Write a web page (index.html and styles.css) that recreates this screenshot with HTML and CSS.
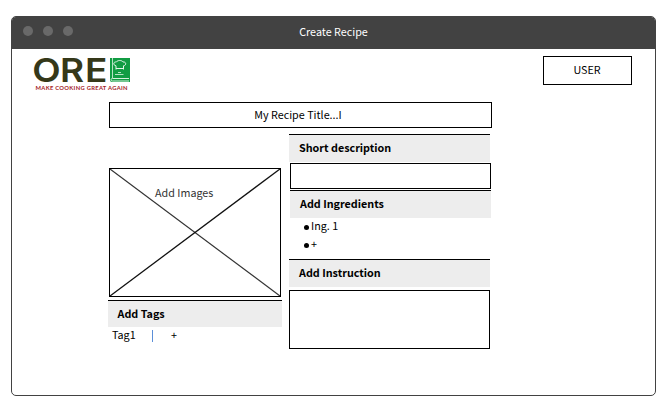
FILE: index.html
```html
<!DOCTYPE html>
<html lang="en">
<head>
<meta charset="utf-8">
<title>Create Recipe</title>
<link rel="stylesheet" href="styles.css">
</head>
<body>
<div class="window">
  <header class="titlebar">
    <div class="dots"><i class="dot"></i><i class="dot"></i><i class="dot"></i></div>
    <h1 class="window-title">Create Recipe</h1>
  </header>
  <div class="top">
    <svg class="logo" width="100" height="44" viewBox="32 49 100 44">
      <text class="logo-name" transform="scale(1.12 1)" x="28.9 53.6 75.9" y="82">ORE</text>
      <text class="logo-tag" x="35.5" y="90.3" textLength="92">MAKE COOKING GREAT AGAIN</text>
      <path d="M110 58H130V82H112Q110 82 110 80Z" fill="#119c43"/>
      <path d="M112.5 58V78" stroke="#b5e2c3" fill="none"/>
      <path d="M129 78.5H112.5Q111 78.5 111 79.7T112.5 81H129" stroke="#d5efdd" stroke-width="1" fill="none"/>
      <path d="M116 69.5V65.8C113 65.5 113 61.5 116.4 62C117.4 60 122 60 123 62C126.5 61.5 126.5 65.6 123.5 65.8V69.5M116 68.5H123.5" stroke="#e4f5e9" stroke-width="1" fill="none"/>
      <path d="M115 74.5H123.5M118 72.5H121" stroke="#b5e2c3" stroke-width="1"/>
    </svg>
    <button class="user">USER</button>
  </div>
  <div class="recipe-title">My Recipe Title...I</div>
  <main class="columns">
    <section class="left">
      <div class="image-box">
        <svg class="cross" width="170" height="127" viewBox="0 0 170 127">
          <path d="M0 0L170 127" stroke="#333" stroke-width="1.2"/>
          <path d="M170 0L0 127" stroke="#111" stroke-width="1.3"/>
        </svg>
        <span class="image-label">Add Images</span>
      </div>
      <h2 class="heading tags-heading">Add Tags</h2>
      <div class="tags"><span class="tag">Tag1</span><i class="divider"></i><span>+</span></div>
    </section>
    <section class="right">
      <h2 class="heading">Short description</h2>
      <div class="field short-field"></div>
      <h2 class="heading shifted">Add Ingredients</h2>
      <ul class="ingredients"><li><i class="bullet"></i>Ing. 1</li><li><i class="bullet"></i>+</li></ul>
      <h2 class="heading">Add Instruction</h2>
      <div class="field long-field"></div>
    </section>
  </main>
</div>
</body>
</html>
```
FILE: styles.css
```css
* { box-sizing: border-box; }
body {
  margin: 0;
  padding: 16px 9px 12px 11px;
  background: #fff;
  color: #000;
  font: 10.75px/16px "Noto Sans CJK SC", "Noto Sans", sans-serif;
}
h1, h2, ul { margin: 0; padding: 0; font-size: inherit; }
.window {
  height: 380px;
  border: 1px solid #424242;
  border-radius: 5px;
  overflow: hidden;
}
.titlebar {
  display: grid;
  grid-template-columns: 1fr auto 1fr;
  height: 32px;
  background: #424242;
}
.dots { display: flex; gap: 10px; padding: 9px 0 0 10.5px; }
.dot { width: 10px; height: 10px; border-radius: 50%; background: #696969; }
.window-title { padding-top: 7px; color: #fff; font-weight: 400; }
.top {
  display: flex;
  justify-content: space-between;
  height: 53px;
  padding: 0 23px 0 20px;
}
.logo { display: block; }
.logo-name { font: 600 33px Inter, sans-serif; fill: #353819; }
.logo-tag { font: 700 5.8px Lato, sans-serif; fill: #a3201f; }
.user {
  width: 89px;
  height: 29px;
  margin-top: 7px;
  padding: 0 1px 1px 0;
  border: 1px solid #000;
  background: #fff;
  color: #000;
  font: inherit;
}
.recipe-title {
  width: 383px;
  height: 26px;
  margin-left: 97px;
  padding-right: 5px;
  border: 1px solid #000;
  line-height: 24px;
  text-align: center;
}
.columns {
  display: grid;
  grid-template-columns: 174px 202px;
  column-gap: 7px;
  margin: 6px 0 0 96px;
}
.left { padding-top: 34px; }
.image-box {
  display: grid;
  width: 172px;
  height: 129px;
  margin-left: 1px;
  border: 1px solid #000;
}
.cross, .image-label { grid-area: 1 / 1; }
.image-label { padding: 16px 0 0 45px; color: #333; }
.heading {
  width: 201px;
  height: 28px;
  padding-left: 10px;
  border-top: 1px solid #000;
  background: #ededed;
  font-weight: 700;
  line-height: 26px;
}
.tags-heading { width: 174px; height: 27px; margin-top: 3px; padding-left: 9.5px; }
.tags { display: flex; align-items: flex-start; padding-left: 4px; height: 17px; }
.tag { width: 40px; }
.divider { width: 1px; height: 12px; margin: 3px 18px 0 0; background: #5b8fd8; }
.field { width: 201px; border: 1px solid #000; }
.short-field { height: 26px; margin: 1px 0 1px 1px; }
.shifted { margin-left: 1px; }
.ingredients { height: 41px; list-style: none; }
.ingredients li { display: flex; align-items: flex-start; height: 18px; padding-left: 15px; }
.bullet { width: 5px; height: 5px; margin: 7px 2px 0 0; border-radius: 50%; background: #000; }
.long-field { height: 59px; margin-top: 3px; }
```
